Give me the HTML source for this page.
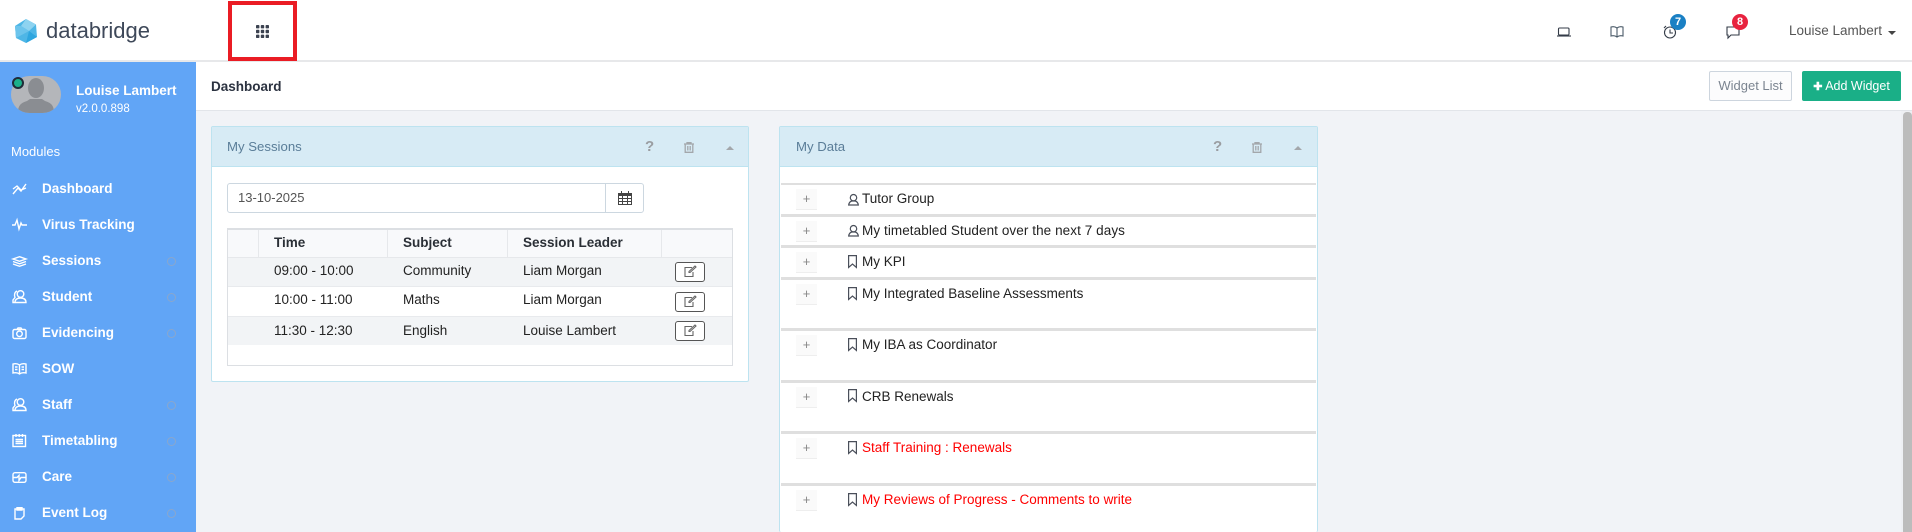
<!DOCTYPE html>
<html lang="en"><head><meta charset="utf-8"><title>Dashboard</title>
<style>
*{box-sizing:border-box}
html,body{margin:0;padding:0}
body{width:1912px;height:532px;overflow:hidden;position:relative;background:#f1f3f7;font-family:"Liberation Sans",sans-serif;font-size:13.5px;color:#222}
.a{position:absolute}
.t{position:absolute;white-space:nowrap;line-height:18px;transform:translateY(-9px)}
svg{position:absolute;overflow:visible}
.nav{color:#fff;font-weight:bold;font-size:13.5px;left:42px}
.ci{position:absolute;left:167px;width:9px;height:9px;border:1px solid #8aa7cc;border-radius:50%}
.ni{left:12px;fill:none;stroke:#fff;stroke-width:1.4}
.th{font-weight:bold;color:#2a2f36}
.sep{position:absolute;left:781px;width:535px;height:3px;background:#dfdfdf}
.pl{position:absolute;left:796px;width:21px;height:21px;background:#fafafa;border-bottom:1px solid #eee;color:#888;text-align:center;font-size:13px;line-height:20px}
.bk{left:848px;fill:none;stroke:#4a4f5a;stroke-width:1.2}
.r{color:#f00}
.ed{position:absolute;left:675px;width:30px;height:20px;border:1px solid #555;border-radius:3px;background:#fff}
</style></head><body>

<!-- top bar -->
<div class="a" style="left:0;top:0;width:1912px;height:62px;background:#fff;border-bottom:2px solid #e7e8ea"></div>
<svg style="left:14px;top:18px" width="24" height="26" viewBox="0 0 24 26"><path d="M12 1 22 6.500 23 19 12 25 2 20 1 8z" fill="#4eb6e6"/><path d="M12 1 22 6.500 15 13 7 8z" fill="#8ed3f0"/><path d="M7 8 15 13 2 20 1 8z" fill="#6cc4ec"/><path d="M15 13 23 19 12 25z" fill="#2ea6df"/></svg>
<div class="t" style="left:46px;top:31px;font-size:22px;color:#3e4859;line-height:26px;transform:translateY(-13px)">databridge</div>

<div class="a" style="left:228px;top:1px;width:69px;height:60px;border:4px solid #ea1c24"></div>
<svg style="left:256px;top:25px" width="14" height="14" fill="#3b4250"><rect width="3.400" height="3.400" rx=".8"/><rect x="4.800" width="3.400" height="3.400" rx=".8"/><rect x="9.600" width="3.400" height="3.400" rx=".8"/><rect y="4.800" width="3.400" height="3.400" rx=".8"/><rect x="4.800" y="4.800" width="3.400" height="3.400" rx=".8"/><rect x="9.600" y="4.800" width="3.400" height="3.400" rx=".8"/><rect y="9.600" width="3.400" height="3.400" rx=".8"/><rect x="4.800" y="9.600" width="3.400" height="3.400" rx=".8"/><rect x="9.600" y="9.600" width="3.400" height="3.400" rx=".8"/></svg>

<svg style="left:1557px;top:27px" width="14" height="10" fill="none" stroke="#333b47" stroke-width="1.100"><rect x="1.500" y="1" width="10.500" height="7" rx="1"/><path d="M0 9h14"/></svg>
<svg style="left:1610px;top:25px" width="14" height="13" fill="none" stroke="#4a5a68" stroke-width="1.100"><path d="M7 3C5 1.500 3 1.500 1 2v9c2-.5 4-.5 6 1 2-1.500 4-1.500 6-1V2c-2-.5-4-.5-6 1zM7 3v9"/></svg>
<svg style="left:1663px;top:25px" width="15" height="14" fill="none" stroke="#333b47" stroke-width="1.100"><circle cx="7" cy="7.500" r="5.500"/><path d="M7 4.500v3.500h3M1 3l2-2"/></svg>
<div class="a" style="left:1670px;top:14px;width:16px;height:16px;border-radius:50%;background:#1a80c4;color:#fff;font-weight:bold;font-size:11px;line-height:16px;text-align:center">7</div>
<svg style="left:1726px;top:26px" width="14" height="12" fill="none" stroke="#333b47" stroke-width="1.100"><path d="M1 1h12v8H5l-3 3V9H1z"/></svg>
<div class="a" style="left:1732px;top:14px;width:16px;height:16px;border-radius:50%;background:#e8233f;color:#fff;font-weight:bold;font-size:11px;line-height:16px;text-align:center">8</div>
<div class="t" style="left:1789px;top:31px;color:#555;font-size:13.5px">Louise Lambert</div>
<div class="a" style="left:1888px;top:31px;border:4px solid transparent;border-top-color:#444;border-bottom:0"></div>

<!-- sidebar -->
<div class="a" style="left:0;top:62px;width:196px;height:470px;background:#61a5f6"></div>
<div class="a" style="left:11px;top:76px;width:50px;height:37px;border-radius:20px;background:#b4b6ba;overflow:hidden">
<svg style="left:0;top:0" width="50" height="37"><ellipse cx="25" cy="12" rx="8" ry="10" fill="#8a8d92"/><path d="M7 37c0-8 3-10 9-12l3-2h12l3 2c6 2 9 4 9 12z" fill="#8a8d92"/></svg></div>
<div class="a" style="left:12px;top:77px;width:12px;height:12px;border-radius:50%;background:#1cb08a;border:2px solid #1f2c38"></div>
<div class="t" style="left:76px;top:91px;color:#fff;font-weight:bold;font-size:13.5px">Louise Lambert</div>
<div class="t" style="left:76px;top:109px;color:#fff;font-size:11.5px">v2.0.0.898</div>
<div class="t" style="left:11px;top:152px;color:#fff;font-size:13px">Modules</div>

<svg class="ni" style="top:183px" width="15" height="12"><path d="M1 11 6 5l3 3 5-7M1 6l4-3 4 4 5-2"/></svg>
<svg class="ni" style="top:219px" width="15" height="11"><path d="M0 6h3l2-5 2 9 2-6 1 2h5"/></svg>
<svg class="ni" style="top:256px" width="15" height="11"><path d="M7.500 .7 14 3 7.500 5.300 1 3zM1 5.500l6.500 2.300L14 5.500M1 8l6.500 2.300L14 8"/></svg>
<svg class="ni" style="top:290px" width="14" height="13"><circle cx="8.500" cy="4" r="3.300"/><path d="M3 12.500c0-3 2-4.500 5.500-4.500s5.500 1.500 5.500 4.500zM5 1C2.500 2 2 5 3 7.500L1 10v2.500h2"/></svg>
<svg class="ni" style="top:327px" width="15" height="12"><rect x="1" y="2.500" width="13" height="9" rx="1.500"/><circle cx="7.500" cy="6.800" r="2.800"/><path d="M5 2.500 6 1h3l1 1.500"/></svg>
<svg class="ni" style="top:362px" width="15" height="13"><path d="M7.500 3C5.500 1.500 3 1.500 1 2v9c2-.5 4.500-.5 6.500 1 2-1.500 4.500-1.500 6.500-1V2c-2-.5-4.500-.5-6.500 1zM7.500 3v9M3 5h2.500M3 7.500h2.500M9.500 5H12M9.500 7.500H12"/></svg>
<svg class="ni" style="top:398px" width="14" height="13"><circle cx="8.500" cy="4" r="3.300"/><path d="M3 12.500c0-3 2-4.500 5.500-4.500s5.500 1.500 5.500 4.500zM5 1C2.500 2 2 5 3 7.500L1 10v2.500h2"/></svg>
<svg class="ni" style="top:434px" width="15" height="13"><rect x="1" y="1.500" width="12.500" height="11"/><path d="M4 0v3M7.200 0v3M10.500 0v3M3.500 5.500h7.500M3.500 7.500h7.500M3.500 9.500h7.500"/></svg>
<svg class="ni" style="top:472px" width="15" height="11"><rect x="1" y=".7" width="13" height="9.600" rx="2"/><path d="M1 5.500h4l2-2v5l2-3h5"/></svg>
<svg class="ni" style="top:507px;left:14px" width="11" height="12"><path d="M1 2h9v7l-3 3H1zM3 .7h5V3H3z"/></svg>

<div class="t nav" style="top:189px">Dashboard</div>
<div class="t nav" style="top:225px">Virus Tracking</div>
<div class="t nav" style="top:261px">Sessions</div>
<div class="t nav" style="top:297px">Student</div>
<div class="t nav" style="top:333px">Evidencing</div>
<div class="t nav" style="top:369px">SOW</div>
<div class="t nav" style="top:405px">Staff</div>
<div class="t nav" style="top:441px">Timetabling</div>
<div class="t nav" style="top:477px">Care</div>
<div class="t nav" style="top:513px">Event Log</div>
<div class="ci" style="top:257px"></div><div class="ci" style="top:293px"></div><div class="ci" style="top:329px"></div><div class="ci" style="top:401px"></div><div class="ci" style="top:437px"></div><div class="ci" style="top:473px"></div><div class="ci" style="top:509px"></div>

<!-- title bar -->
<div class="a" style="left:196px;top:62px;width:1716px;height:49px;background:#fff;border-bottom:1px solid #e2e5ea"></div>
<div class="t" style="left:211px;top:87px;font-weight:bold;font-size:13.5px;color:#2b3240">Dashboard</div>
<div class="a" style="left:1709px;top:71px;width:83px;height:30px;background:#fcfcfd;border:1px solid #cdd5de;border-radius:2px;color:#7b8490;text-align:center;line-height:28px;font-size:13px">Widget List</div>
<div class="a" style="left:1802px;top:71px;width:99px;height:30px;background:#1aaf87;border-radius:2px;color:#fff;text-align:center;line-height:30px;font-size:12.5px"><b style="font-size:11px">✚</b> Add Widget</div>

<!-- scrollbar -->
<div class="a" style="left:1901px;top:111px;width:11px;height:421px;background:#eef0f4"></div>
<div class="a" style="left:1903px;top:112px;width:9px;height:420px;background:#bcbcbc;border-radius:4px 4px 0 0"></div>

<!-- My Sessions -->
<div class="a" style="left:211px;top:126px;width:538px;height:256px;background:#fff;border:1px solid #bde3f0;border-radius:2px"></div>
<div class="a" style="left:212px;top:127px;width:536px;height:40px;background:#d7ebf5;border-bottom:1px solid #bde3f0"></div>
<div class="t" style="left:227px;top:147px;font-size:13.2px;color:#5a7d98">My Sessions</div>
<div class="t" style="left:645px;top:147px;font-weight:bold;font-size:15px;color:#9a9da1">?</div>
<svg style="left:684px;top:142px" width="10" height="11" fill="none" stroke="#a3a7ab" stroke-width="1.300"><path d="M0 2h10M3 2V.7h4V2M1.200 2v8.300h7.600V2M3.800 4v4.500M6.200 4v4.500"/></svg>
<div class="a" style="left:726px;top:146px;border:4px solid transparent;border-bottom-color:#a3a7ab;border-top:0"></div>

<div class="a" style="left:227px;top:183px;width:417px;height:30px;border:1px solid #ccd7e0;border-radius:3px;background:#fff"></div>
<div class="a" style="left:605px;top:183px;width:1px;height:30px;background:#ccd7e0"></div>
<div class="t" style="left:238px;top:198px;color:#555;font-size:13px">13-10-2025</div>
<svg style="left:618px;top:191px" width="14" height="14" fill="none" stroke="#444" stroke-width="1"><rect x=".5" y="2.500" width="13" height="11"/><path d="M.5 3.500h13M.5 4.500h13M.5 7.500h13M.5 10.500h13M4.500 5v8.500M9.500 5v8.500M3.500 0v3M10.500 0v3" /></svg>

<!-- table -->
<div class="a" style="left:227px;top:228px;width:506px;height:138px;border:1px solid #dcdfe3;border-top:2px solid #dcdfe3;background:#fff"></div>
<div class="a" style="left:228px;top:230px;width:504px;height:28px;background:#f8f9fb;border-bottom:1px solid #e6e8eb"></div>
<div class="a" style="left:258px;top:230px;width:1px;height:28px;background:#e6e8eb"></div>
<div class="a" style="left:387px;top:230px;width:1px;height:28px;background:#e6e8eb"></div>
<div class="a" style="left:507px;top:230px;width:1px;height:28px;background:#e6e8eb"></div>
<div class="a" style="left:661px;top:230px;width:1px;height:28px;background:#e6e8eb"></div>
<div class="t th" style="left:274px;top:243px">Time</div>
<div class="t th" style="left:403px;top:243px">Subject</div>
<div class="t th" style="left:523px;top:243px">Session Leader</div>
<div class="a" style="left:228px;top:258px;width:504px;height:29px;background:#f2f4f6;border-bottom:1px solid #e8eaed"></div>
<div class="a" style="left:228px;top:316px;width:504px;height:29px;background:#f2f4f6;border-top:1px solid #e8eaed"></div>
<div class="t" style="left:274px;top:271px">09:00 - 10:00</div><div class="t" style="left:403px;top:271px">Community</div><div class="t" style="left:523px;top:271px">Liam Morgan</div>
<div class="t" style="left:274px;top:300px">10:00 - 11:00</div><div class="t" style="left:403px;top:300px">Maths</div><div class="t" style="left:523px;top:300px">Liam Morgan</div>
<div class="t" style="left:274px;top:331px">11:30 - 12:30</div><div class="t" style="left:403px;top:331px">English</div><div class="t" style="left:523px;top:331px">Louise Lambert</div>
<div class="ed" style="top:262px"></div><div class="ed" style="top:292px"></div><div class="ed" style="top:321px"></div>
<svg style="left:684px;top:266px" width="13" height="11" fill="none" stroke="#666" stroke-width="1.100"><path d="M8 1.500H1v9h8V6M5 6.500h1l6-5.500-1-1-6 5.500z"/></svg>
<svg style="left:684px;top:296px" width="13" height="11" fill="none" stroke="#666" stroke-width="1.100"><path d="M8 1.500H1v9h8V6M5 6.500h1l6-5.500-1-1-6 5.500z"/></svg>
<svg style="left:684px;top:325px" width="13" height="11" fill="none" stroke="#666" stroke-width="1.100"><path d="M8 1.500H1v9h8V6M5 6.500h1l6-5.500-1-1-6 5.500z"/></svg>

<!-- My Data -->
<div class="a" style="left:779px;top:126px;width:539px;height:406px;background:#fff;border:1px solid #bde3f0;border-bottom:0;border-radius:2px"></div>
<div class="a" style="left:780px;top:127px;width:537px;height:40px;background:#d7ebf5;border-bottom:1px solid #bde3f0"></div>
<div class="t" style="left:796px;top:147px;font-size:13.2px;color:#5a7d98">My Data</div>
<div class="t" style="left:1213px;top:147px;font-weight:bold;font-size:15px;color:#9a9da1">?</div>
<svg style="left:1252px;top:142px" width="10" height="11" fill="none" stroke="#a3a7ab" stroke-width="1.300"><path d="M0 2h10M3 2V.7h4V2M1.200 2v8.300h7.600V2M3.800 4v4.500M6.200 4v4.500"/></svg>
<div class="a" style="left:1294px;top:146px;border:4px solid transparent;border-bottom-color:#a3a7ab;border-top:0"></div>

<div class="sep" style="top:183px;height:2px"></div><div class="sep" style="top:214px"></div><div class="sep" style="top:245px"></div><div class="sep" style="top:277px"></div><div class="sep" style="top:328px"></div><div class="sep" style="top:380px"></div><div class="sep" style="top:431px"></div><div class="sep" style="top:483px"></div>

<div class="pl" style="top:189px">+</div><div class="pl" style="top:221px">+</div><div class="pl" style="top:252px">+</div><div class="pl" style="top:284px">+</div><div class="pl" style="top:335px">+</div><div class="pl" style="top:387px">+</div><div class="pl" style="top:438px">+</div><div class="pl" style="top:490px">+</div>

<svg class="bk" style="top:194px" width="11" height="12"><ellipse cx="5.500" cy="3.700" rx="3.200" ry="3.200"/><path d="M.7 11c.3-2.500 1.500-3.500 3-4h3.600c1.500.5 2.700 1.500 3 4z"/></svg>
<svg class="bk" style="top:225px" width="11" height="12"><ellipse cx="5.500" cy="3.700" rx="3.200" ry="3.200"/><path d="M.7 11c.3-2.500 1.500-3.500 3-4h3.600c1.500.5 2.700 1.500 3 4z"/></svg>
<svg class="bk" style="top:255px" width="9" height="13"><path d="M.6.600h7.800v11.800L4.500 9 .6 12.400z"/></svg>
<svg class="bk" style="top:287px" width="9" height="13"><path d="M.6.600h7.800v11.800L4.500 9 .6 12.400z"/></svg>
<svg class="bk" style="top:338px" width="9" height="13"><path d="M.6.600h7.800v11.800L4.500 9 .6 12.400z"/></svg>
<svg class="bk" style="top:389px" width="9" height="13"><path d="M.6.600h7.800v11.800L4.500 9 .6 12.400z"/></svg>
<svg class="bk" style="top:441px" width="9" height="13"><path d="M.6.600h7.800v11.800L4.500 9 .6 12.400z"/></svg>
<svg class="bk" style="top:493px" width="9" height="13"><path d="M.6.600h7.800v11.800L4.500 9 .6 12.400z"/></svg>

<div class="t" style="left:862px;top:199px">Tutor Group</div>
<div class="t" style="left:862px;top:231px;letter-spacing:.08px">My timetabled Student over the next 7 days</div>
<div class="t" style="left:862px;top:262px">My KPI</div>
<div class="t" style="left:862px;top:294px">My Integrated Baseline Assessments</div>
<div class="t" style="left:862px;top:345px">My IBA as Coordinator</div>
<div class="t" style="left:862px;top:397px">CRB Renewals</div>
<div class="t r" style="left:862px;top:448px">Staff Training : Renewals</div>
<div class="t r" style="left:862px;top:500px">My Reviews of Progress - Comments to write</div>
</body></html>
